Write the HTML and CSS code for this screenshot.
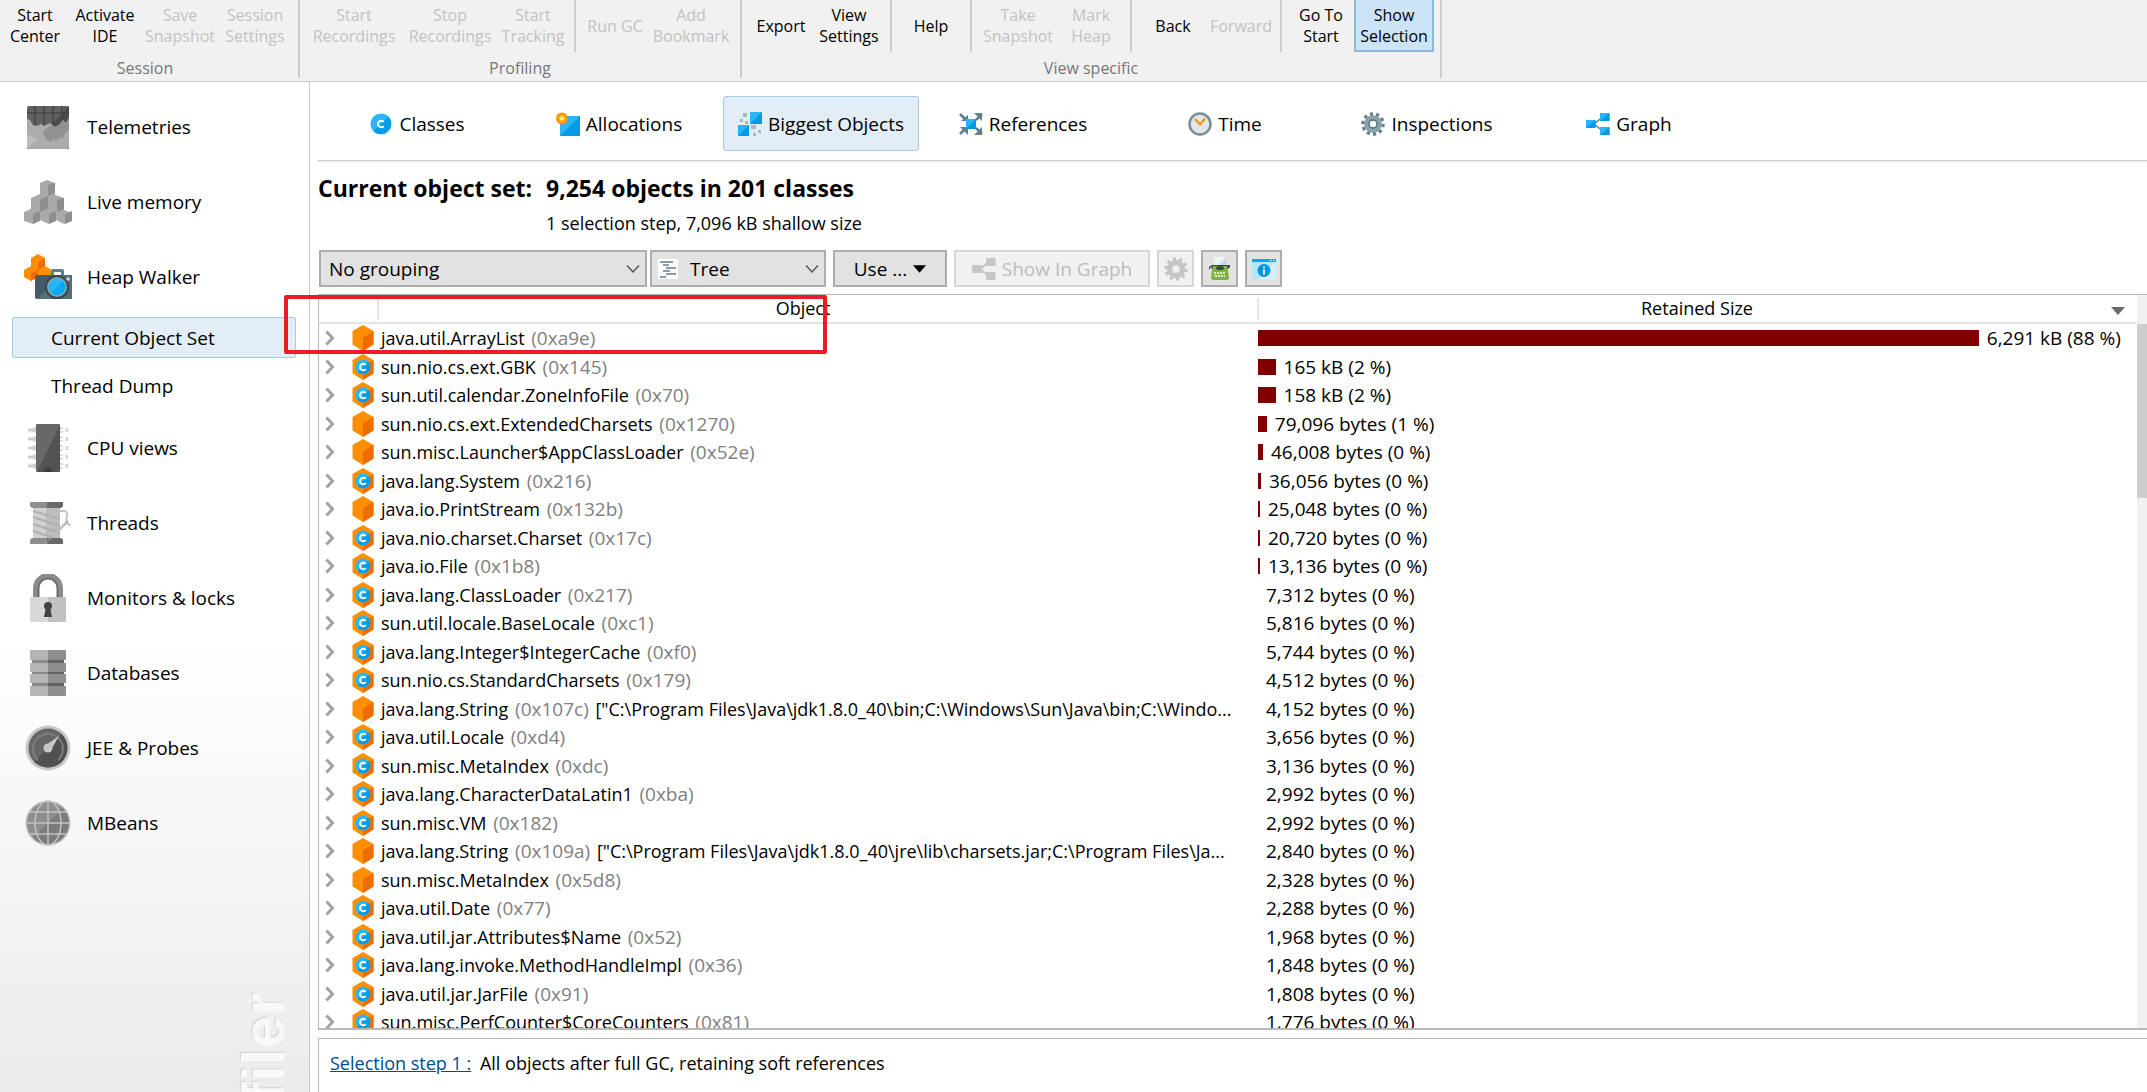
FILE: index.html
```html
<!DOCTYPE html>
<html lang="en">
<head>
<meta charset="utf-8">
<title>JProfiler - Heap Walker</title>
<link rel="stylesheet" href="styles.css">
</head>
<body>
<svg class="defs" aria-hidden="true">
  <symbol id="arrow" viewBox="0 0 10 16"><path d="M1.5 1.5 7.5 8 1.5 14.5" fill="none" stroke="#a2a2a2" stroke-width="3"/></symbol>
  <symbol id="cube" viewBox="0 0 22 26"><path d="M11 0 21.500 6V19.500L11 26 .5 19.500V6z" fill="#ff8f00"/><path d="M11 12.500 21.500 6V19.500L11 26z" fill="#ef6c00"/></symbol>
  <symbol id="class" viewBox="0 0 22 26"><path d="M11 0 21.500 6V19.500L11 26 .5 19.500V6z" fill="#ff8f00"/><path d="M11 12.500 21.500 6V19.500L11 26z" fill="#ef6c00"/><circle cx="11" cy="13" r="7.500" fill="#29b6f6"/><path d="M16.300 7.700A7.500 7.500 0 0 1 5.700 18.300z" fill="#039be5"/><path d="M13.800 10.800A3.300 3.300 0 1 0 13.800 15.200" fill="none" stroke="#fff" stroke-width="2"/></symbol>
  <symbol id="graph" viewBox="0 0 24 24"><path d="M8 12 18 4M8 12 18 20" stroke="#607d8b" stroke-width="1.500"/><path d="M0 8H9.500V16H0zM14 1H23.500V9H14zM14 15H23.500V23H14z" fill="#29b6f6"/><path d="M9.500 8V16H0zM23.500 1V9H14zM23.500 15V23H14z" fill="#039be5"/></symbol>
  <symbol id="graph-off" viewBox="0 0 24 24"><path d="M8 12 18 4M8 12 18 20" stroke="#c6c6c6" stroke-width="2"/><path d="M0 8H9.500V16H0zM14 1H23.500V9H14zM14 15H23.500V23H14z" fill="#c6c6c6"/></symbol>
  <symbol id="chevron" viewBox="0 0 14 10"><path d="M1 1.500 7 8 13 1.500" fill="none" stroke="#555" stroke-width="1.500"/></symbol>
</svg>

<header class="ribbon">
  <section class="group">
    <div class="tools">
      <button class="tool w70">Start<br>Center</button>
      <button class="tool w70">Activate<br>IDE</button>
      <button class="tool w80" disabled>Save<br>Snapshot</button>
      <button class="tool w70" disabled>Session<br>Settings</button>
    </div>
    <p class="caption">Session</p>
  </section>
  <section class="group">
    <div class="tools">
      <button class="tool w96" disabled>Start<br>Recordings</button>
      <button class="tool w96" disabled>Stop<br>Recordings</button>
      <button class="tool w70" disabled>Start<br>Tracking</button>
      <span class="sep"></span>
      <button class="tool w66" disabled>Run GC</button>
      <button class="tool w86" disabled>Add<br>Bookmark</button>
    </div>
    <p class="caption">Profiling</p>
  </section>
  <section class="group">
    <div class="tools">
      <button class="tool w66">Export</button>
      <button class="tool w70">View<br>Settings</button>
      <span class="sep"></span>
      <button class="tool w66">Help</button>
      <span class="sep"></span>
      <button class="tool w80" disabled>Take<br>Snapshot</button>
      <button class="tool w66" disabled>Mark<br>Heap</button>
      <span class="sep"></span>
      <button class="tool w70">Back</button>
      <button class="tool w66" disabled>Forward</button>
      <span class="sep"></span>
      <button class="tool w66">Go To<br>Start</button>
      <button class="tool w80 active">Show<br>Selection</button>
    </div>
    <p class="caption">View specific</p>
  </section>
</header>

<div class="workspace">
  <nav class="sidebar">
    <a class="view" href="#telemetries"><svg viewBox="0 0 48 48"><rect x="3" y="3" width="42" height="43" rx="2" fill="#616161"/><path d="M45 3V46H3z" fill="#4c4c4c"/><path d="M3 10H45M11 3V24M20 3V24M29 3V24M38 3V24" stroke="#3a3a3a" stroke-width="1"/><path d="M3 16 6 17 9 22 13 23 17 21 20 23 26 20 31 24 35 22 39 17 42 20 45 14V44a2 2 0 0 1-2 2H5a2 2 0 0 1-2-2z" fill="#acacac"/><path d="M19 29 26 22 31 24 35 22 39 17 42 20 45 15V27L41 30 39 36 36 34 32 38 29 36 27 39 22 37z" fill="#929292"/><path d="M3 31 14 36 3 45z" fill="#bdbdbd"/></svg>Telemetries</a>
    <a class="view" href="#live"><svg viewBox="0 0 48 48"><path d="M16 5 23 2 31 5V17L40 20V32L48 35V43L40 46 32 42 25 46 16 42 9 46 0 43V34L7 31V20L16 16z" fill="#a9a9a9"/><path d="M24 7 31 5V15L24 18zM16 22 24 18 24 30 16 34zM33 22 40 20V31L33 34zM9 36 16 33V43L9 46zM25 36 32 33V43L25 46zM41 36 48 33V43L41 46z" fill="#8e8e8e"/></svg>Live memory</a>
    <a class="view" href="#heap"><svg viewBox="0 0 48 48"><path d="M7 5 14 1 21 5V13L28 17V23L20 27 14 24 7 28 0 24V17L7 13z" fill="#ff8f00"/><path d="M14 9 21 5V13L14 17zM7 20 14 17V24L7 28z" fill="#ef6c00"/><path d="M27 23V18q0-2 2-2H38q2 0 2 2v5H37V19H30v4z" fill="#607d8b"/><rect x="11" y="22" width="37" height="24" rx="2" fill="#455a64"/><path d="M48 22V46H13L37 22z" fill="#546e7a"/><circle cx="33" cy="34" r="12" fill="#37474f"/><circle cx="33" cy="34" r="10" fill="#90a4ae"/><circle cx="33" cy="34" r="8.500" fill="#29b6f6"/><path d="M39 28A8.500 8.500 0 0 1 27 40z" fill="#03a9f4"/><circle cx="44" cy="26" r="1.800" fill="#cfd8dc"/></svg>Heap Walker</a>
    <div class="subviews">
      <a class="sub selected" href="#objects">Current Object Set</a>
      <a class="sub" href="#dump">Thread Dump</a>
    </div>
    <a class="view" href="#cpu"><svg viewBox="0 0 48 48"><path d="M4 6 12 3V9zM4 15l8-3v6zM4 24l8-3v6zM4 33l8-3v6zM4 42l8-3v6zM4 4.500h8v3H4zM4 13.500h8v3H4zM4 22.500h8v3H4zM4 31.500h8v3H4zM4 40.500h8v3H4z" fill="#cfcfcf"/><path d="M44 6 36 3V9zM44 15l-8-3v6zM44 24l-8-3v6zM44 33l-8-3v6zM44 42l-8-3v6zM36 4.500h8v3h-8zM36 13.500h8v3h-8zM36 22.500h8v3h-8zM36 31.500h8v3h-8zM36 40.500h8v3h-8z" fill="#b5b5b5"/><rect x="12" width="24" height="48" rx="1" fill="#686868"/><path d="M36 1V48H13z" fill="#535353"/><path d="M20 48a4 4.500 0 0 1 8 0z" fill="#3c3c3c"/></svg>CPU views</a>
    <a class="view" href="#threads"><svg viewBox="0 0 48 48"><path d="M36 12h4q4 0 3 5l-1 5q-1 3 5 4" fill="none" stroke="#c4c4c4" stroke-width="2"/><path d="M9 8H36V40H9z" fill="#d0d0d0"/><path d="M22 8H36V40H22z" fill="#bdbdbd"/><path d="M9 12 36 20M9 18 36 27M9 25 36 34M9 32 30 39" stroke="#b0b0b0" stroke-width="2"/><path d="M6 3H39V7L37 9H8L6 7zM6 45H39V41L37 39H8L6 41z" fill="#8d8d8d"/><path d="M23 3H39V7L37 9H23zM23 45H39V41L37 39H23z" fill="#696969"/><path d="M19 47 43 21l2 2z" fill="#b8b8b8"/></svg>Threads</a>
    <a class="view" href="#monitors"><svg viewBox="0 0 48 48"><path d="M12 24V14a12 12 0 0 1 24 0V24" fill="none" stroke="#8b8b8b" stroke-width="6"/><path d="M14.500 24V14a9.500 9.500 0 0 1 19 0V24" fill="none" stroke="#6c6c6c" stroke-width="2"/><rect x="6" y="23" width="36" height="25" rx="1" fill="#d8d8d8"/><path d="M24 23H41q1 0 1 1V47q0 1-1 1H24z" fill="#c1c1c1"/><circle cx="24" cy="32" r="4" fill="#424242"/><path d="M22 33h4l2 10h-8z" fill="#424242"/></svg>Monitors &amp; locks</a>
    <a class="view" href="#databases"><svg viewBox="0 0 48 48"><path d="M8 8H40V40H8z" fill="#8a8a8a"/><path d="M24 8H40V40H24z" fill="#626262"/><path d="M6 2q0-1 1-1H24V11H7q-1 0-1-1zM6 14H24V23H7q-1 0-1-1zM6 25H24V34H7q-1 0-1-1zM6 37H24V47H7q-1 0-1-1z" fill="#b5b5b5"/><path d="M42 2q0-1-1-1H24V11H41q1 0 1-1zM42 14H24V23H41q1 0 1-1zM42 25H24V34H41q1 0 1-1zM42 37H24V47H41q1 0 1-1z" fill="#8e8e8e"/></svg>Databases</a>
    <a class="view" href="#probes"><svg viewBox="0 0 48 48"><circle cx="24" cy="24" r="22.500" fill="#c8c8c8"/><circle cx="24" cy="24" r="19.500" fill="#666"/><path d="M37.800 10.200A19.500 19.500 0 0 1 10.200 37.800z" fill="#505050"/><path d="M14 36A15 15 0 1 1 34 36" fill="none" stroke="#7d7d7d" stroke-width="2"/><path d="M35 12 27 26 22 21z" fill="#c8c8c8"/><circle cx="24" cy="24" r="4.500" fill="#c8c8c8"/></svg>JEE &amp; Probes</a>
    <a class="view" href="#mbeans"><svg viewBox="0 0 48 48"><circle cx="24" cy="24" r="22" fill="#8f8f8f"/><path d="M39.600 8.400A22 22 0 0 1 8.400 39.600z" fill="#7b7b7b"/><g fill="none" stroke="#c2c2c2" stroke-width="1.500"><circle cx="24" cy="24" r="21.800"/><ellipse cx="24" cy="24" rx="13" ry="22"/><path d="M24 2V46M2 24H46M6 13H42M6 35H42"/></g></svg>MBeans</a>
    <span class="brand">JProfiler</span>
  </nav>

  <main class="content">
    <nav class="tabs">
      <button class="tab"><svg viewBox="0 0 24 24"><circle cx="12" cy="12" r="10.500" fill="#29b6f6"/><path d="M19.400 4.600A10.500 10.500 0 0 1 4.600 19.400z" fill="#039be5"/><path d="M14.800 9.800A3.300 3.300 0 1 0 14.800 14.200" fill="none" stroke="#fff" stroke-width="2"/></svg>Classes</button>
      <button class="tab"><svg viewBox="0 0 24 24"><path d="M4 4H24V24H4z" fill="#29b6f6"/><path d="M24 4V24H4z" fill="#039be5"/><circle cx="6" cy="6.500" r="6" fill="#ff8f00"/><circle cx="6" cy="6.500" r="4" fill="#ffb300"/><circle cx="6" cy="6.500" r="2" fill="#ffecb3"/></svg>Allocations</button>
      <button class="tab current"><svg viewBox="0 0 24 24"><path d="M12 0H24V12H12zM0 13H11V24H0z" fill="#29b6f6"/><path d="M24 0V12H12zM11 13V24H0z" fill="#039be5"/><path d="M5 1H9V5H5zM2 7H5V10H2zM7 9H10V12H7zM13 13H18V17H13zM20 18H23V21H20zM15 21H18V24H15z" fill="#a6b8c2"/></svg>Biggest Objects</button>
      <button class="tab"><svg viewBox="0 0 24 24"><path d="M1 2 7 8M23 2 17 8M1 22 7 16M23 22 17 16" stroke="#607d8b" stroke-width="2.500"/><path d="M9 9H2L9 3zM15 1H23V9zM1 15H9V23zM23 15V23H15z" fill="#607d8b"/><path d="M7 7H17V17H7z" fill="#29b6f6"/><path d="M17 7V17H7z" fill="#039be5"/></svg>References</button>
      <button class="tab"><svg viewBox="0 0 24 24"><circle cx="12" cy="12" r="10.500" fill="#e4e7e9" stroke="#78909c" stroke-width="2.500"/><path d="M7 7 12 12.500 17 6.500" fill="none" stroke="#ff8f00" stroke-width="2"/></svg>Time</button>
      <button class="tab"><svg viewBox="0 0 24 24"><circle cx="12" cy="12" r="10" fill="none" stroke="#607d8b" stroke-width="3.500" pathLength="20" stroke-dasharray="1 1"/><circle cx="12" cy="12" r="6.500" fill="none" stroke="#8aa0ab" stroke-width="5"/><circle cx="12" cy="12" r="4" fill="#fff" stroke="#546e7a" stroke-width="1.500"/></svg>Inspections</button>
      <button class="tab"><svg><use href="#graph"/></svg>Graph</button>
    </nav>

    <section class="summary">
      <h1>Current object set:</h1>
      <h1>9,254 objects in 201 classes</h1>
      <p>1 selection step, 7,096 kB shallow size</p>
    </section>

    <div class="toolbar">
      <div class="combo grouping">
        <select aria-label="Grouping"><option>No grouping</option></select>
        <svg class="drop"><use href="#chevron"/></svg>
      </div>
      <div class="combo mode">
        <svg class="lead" viewBox="0 0 20 20"><path d="M0 0H20V20H0z" fill="#fff"/><path d="M2 3H15M5 6H11M8 9H18M5 12H12M8 15H18M2 18H8" stroke="#607d8b" stroke-width="1.500"/></svg>
        <select aria-label="View mode"><option>Tree</option></select>
        <svg class="drop"><use href="#chevron"/></svg>
      </div>
      <button class="push use">Use ...<svg class="down" viewBox="0 0 12 7"><path d="M0 0H12L6 7z"/></svg></button>
      <button class="push show" disabled><svg><use href="#graph-off"/></svg>Show In Graph</button>
      <button class="push square" disabled aria-label="Settings"><svg viewBox="0 0 24 24"><circle cx="12" cy="12" r="10" fill="none" stroke="#c6c6c6" stroke-width="3.500" pathLength="20" stroke-dasharray="1 1"/><circle cx="12" cy="12" r="6.500" fill="none" stroke="#c6c6c6" stroke-width="5.500"/></svg></button>
      <button class="push square" aria-label="Edit"><svg viewBox="0 0 24 24"><path d="M6 0H18V11H6z" fill="#e8f4fa"/><path d="M18 0V11H8z" fill="#c4dbe6"/><path d="M1 10 4 8H22V10L20 12H4L3 10 1 13z" fill="#37474f"/><path d="M5 9H19L20 13 21 21q0 2-2 2H5q-2 0-2-2L4 13z" fill="#7cb342"/><ellipse cx="12" cy="11" rx="4" ry="2" fill="#37474f"/><path d="M6 16H18M7 19H17" stroke="#dcedc8" stroke-width="1.800" stroke-dasharray="2 1"/></svg></button>
      <button class="push square" aria-label="Information"><svg viewBox="0 0 24 24"><path d="M0 2H24V22H0z" fill="#b3e5fc"/><path d="M24 5V22H7z" fill="#d4f0fd"/><path d="M0 2H24V5H0z" fill="#03a9f4"/><path d="M18 3h1.500v1H18zM21 3h1.500v1H21z" fill="#fff"/><circle cx="12" cy="13.500" r="6.500" fill="#0396e0"/><path d="M12 9.500V11M12 12.200V17.500" stroke="#fff" stroke-width="1.800"/></svg></button>
    </div>

    <div class="panel">
      <div class="viewport">
      <table class="objects">
        <colgroup><col class="c-mark"><col><col></colgroup>
        <thead><tr><th></th><th class="h-name">Object</th><th class="h-size">Retained Size<svg class="sort" viewBox="0 0 14 8"><path d="M0 0H14L7 8z" fill="#6b6b6b"/></svg></th></tr></thead>
        <tbody>
          <tr><td class="mark"><button><svg><use href="#arrow"/></svg></button><svg class="kind"><use href="#cube"/></svg></td><td class="name">java.util.ArrayList <i>(0xa9e)</i></td><td><div class="meter"><span class="bar" style="width:82%"></span>6,291 kB (88 %)</div></td></tr>
          <tr><td class="mark"><button><svg><use href="#arrow"/></svg></button><svg class="kind"><use href="#class"/></svg></td><td class="name">sun.nio.cs.ext.GBK <i>(0x145)</i></td><td><div class="meter"><span class="bar" style="width:2%"></span>165 kB (2 %)</div></td></tr>
          <tr><td class="mark"><button><svg><use href="#arrow"/></svg></button><svg class="kind"><use href="#class"/></svg></td><td class="name">sun.util.calendar.ZoneInfoFile <i>(0x70)</i></td><td><div class="meter"><span class="bar" style="width:2%"></span>158 kB (2 %)</div></td></tr>
          <tr><td class="mark"><button><svg><use href="#arrow"/></svg></button><svg class="kind"><use href="#cube"/></svg></td><td class="name">sun.nio.cs.ext.ExtendedCharsets <i>(0x1270)</i></td><td><div class="meter"><span class="bar" style="width:1%"></span>79,096 bytes (1 %)</div></td></tr>
          <tr><td class="mark"><button><svg><use href="#arrow"/></svg></button><svg class="kind"><use href="#cube"/></svg></td><td class="name">sun.misc.Launcher$AppClassLoader <i>(0x52e)</i></td><td><div class="meter"><span class="bar" style="width:5px"></span>46,008 bytes (0 %)</div></td></tr>
          <tr><td class="mark"><button><svg><use href="#arrow"/></svg></button><svg class="kind"><use href="#class"/></svg></td><td class="name">java.lang.System <i>(0x216)</i></td><td><div class="meter"><span class="bar" style="width:3px"></span>36,056 bytes (0 %)</div></td></tr>
          <tr><td class="mark"><button><svg><use href="#arrow"/></svg></button><svg class="kind"><use href="#cube"/></svg></td><td class="name">java.io.PrintStream <i>(0x132b)</i></td><td><div class="meter"><span class="bar" style="width:2px"></span>25,048 bytes (0 %)</div></td></tr>
          <tr><td class="mark"><button><svg><use href="#arrow"/></svg></button><svg class="kind"><use href="#class"/></svg></td><td class="name">java.nio.charset.Charset <i>(0x17c)</i></td><td><div class="meter"><span class="bar" style="width:2px"></span>20,720 bytes (0 %)</div></td></tr>
          <tr><td class="mark"><button><svg><use href="#arrow"/></svg></button><svg class="kind"><use href="#class"/></svg></td><td class="name">java.io.File <i>(0x1b8)</i></td><td><div class="meter"><span class="bar" style="width:2px"></span>13,136 bytes (0 %)</div></td></tr>
          <tr><td class="mark"><button><svg><use href="#arrow"/></svg></button><svg class="kind"><use href="#class"/></svg></td><td class="name">java.lang.ClassLoader <i>(0x217)</i></td><td><div class="meter"><span class="bar" style="width:0"></span>7,312 bytes (0 %)</div></td></tr>
          <tr><td class="mark"><button><svg><use href="#arrow"/></svg></button><svg class="kind"><use href="#class"/></svg></td><td class="name">sun.util.locale.BaseLocale <i>(0xc1)</i></td><td><div class="meter"><span class="bar" style="width:0"></span>5,816 bytes (0 %)</div></td></tr>
          <tr><td class="mark"><button><svg><use href="#arrow"/></svg></button><svg class="kind"><use href="#class"/></svg></td><td class="name">java.lang.Integer$IntegerCache <i>(0xf0)</i></td><td><div class="meter"><span class="bar" style="width:0"></span>5,744 bytes (0 %)</div></td></tr>
          <tr><td class="mark"><button><svg><use href="#arrow"/></svg></button><svg class="kind"><use href="#class"/></svg></td><td class="name">sun.nio.cs.StandardCharsets <i>(0x179)</i></td><td><div class="meter"><span class="bar" style="width:0"></span>4,512 bytes (0 %)</div></td></tr>
          <tr><td class="mark"><button><svg><use href="#arrow"/></svg></button><svg class="kind"><use href="#cube"/></svg></td><td class="name">java.lang.String <i>(0x107c)</i> ["C:\Program Files\Java\jdk1.8.0_40\bin;C:\Windows\Sun\Java\bin;C:\Windo...</td><td><div class="meter"><span class="bar" style="width:0"></span>4,152 bytes (0 %)</div></td></tr>
          <tr><td class="mark"><button><svg><use href="#arrow"/></svg></button><svg class="kind"><use href="#class"/></svg></td><td class="name">java.util.Locale <i>(0xd4)</i></td><td><div class="meter"><span class="bar" style="width:0"></span>3,656 bytes (0 %)</div></td></tr>
          <tr><td class="mark"><button><svg><use href="#arrow"/></svg></button><svg class="kind"><use href="#class"/></svg></td><td class="name">sun.misc.MetaIndex <i>(0xdc)</i></td><td><div class="meter"><span class="bar" style="width:0"></span>3,136 bytes (0 %)</div></td></tr>
          <tr><td class="mark"><button><svg><use href="#arrow"/></svg></button><svg class="kind"><use href="#class"/></svg></td><td class="name">java.lang.CharacterDataLatin1 <i>(0xba)</i></td><td><div class="meter"><span class="bar" style="width:0"></span>2,992 bytes (0 %)</div></td></tr>
          <tr><td class="mark"><button><svg><use href="#arrow"/></svg></button><svg class="kind"><use href="#class"/></svg></td><td class="name">sun.misc.VM <i>(0x182)</i></td><td><div class="meter"><span class="bar" style="width:0"></span>2,992 bytes (0 %)</div></td></tr>
          <tr><td class="mark"><button><svg><use href="#arrow"/></svg></button><svg class="kind"><use href="#cube"/></svg></td><td class="name">java.lang.String <i>(0x109a)</i> ["C:\Program Files\Java\jdk1.8.0_40\jre\lib\charsets.jar;C:\Program Files\Ja...</td><td><div class="meter"><span class="bar" style="width:0"></span>2,840 bytes (0 %)</div></td></tr>
          <tr><td class="mark"><button><svg><use href="#arrow"/></svg></button><svg class="kind"><use href="#cube"/></svg></td><td class="name">sun.misc.MetaIndex <i>(0x5d8)</i></td><td><div class="meter"><span class="bar" style="width:0"></span>2,328 bytes (0 %)</div></td></tr>
          <tr><td class="mark"><button><svg><use href="#arrow"/></svg></button><svg class="kind"><use href="#class"/></svg></td><td class="name">java.util.Date <i>(0x77)</i></td><td><div class="meter"><span class="bar" style="width:0"></span>2,288 bytes (0 %)</div></td></tr>
          <tr><td class="mark"><button><svg><use href="#arrow"/></svg></button><svg class="kind"><use href="#class"/></svg></td><td class="name">java.util.jar.Attributes$Name <i>(0x52)</i></td><td><div class="meter"><span class="bar" style="width:0"></span>1,968 bytes (0 %)</div></td></tr>
          <tr><td class="mark"><button><svg><use href="#arrow"/></svg></button><svg class="kind"><use href="#class"/></svg></td><td class="name">java.lang.invoke.MethodHandleImpl <i>(0x36)</i></td><td><div class="meter"><span class="bar" style="width:0"></span>1,848 bytes (0 %)</div></td></tr>
          <tr><td class="mark"><button><svg><use href="#arrow"/></svg></button><svg class="kind"><use href="#class"/></svg></td><td class="name">java.util.jar.JarFile <i>(0x91)</i></td><td><div class="meter"><span class="bar" style="width:0"></span>1,808 bytes (0 %)</div></td></tr>
          <tr><td class="mark"><button><svg><use href="#arrow"/></svg></button><svg class="kind"><use href="#class"/></svg></td><td class="name">sun.misc.PerfCounter$CoreCounters <i>(0x81)</i></td><td><div class="meter"><span class="bar" style="width:0"></span>1,776 bytes (0 %)</div></td></tr>
        </tbody>
      </table>
      </div>
      <div class="scroll"><div class="thumb"></div></div>
      <div class="marker"></div>
    </div>

    <footer class="steps"><a href="#step1">Selection step 1 :</a> All objects after full GC, retaining soft references</footer>
  </main>
</div>
</body>
</html>
```
FILE: styles.css
```css
* { box-sizing: border-box; }

body {
  margin: 0;
  height: 100vh;
  display: flex;
  flex-direction: column;
  overflow: hidden;
  background: #fff;
  color: #000;
  font: 18px/28px "Open Sans", "Noto Sans", sans-serif;
}

button, select { font: inherit; color: inherit; }
button { padding: 0; border: 0; background: none; }
svg { flex: none; display: block; }
p, h1 { margin: 0; }
.defs { position: absolute; width: 0; height: 0; }

/* Ribbon */
.ribbon {
  flex: none;
  display: flex;
  height: 82px;
  background: #f1f1f1;
  border-bottom: 1px solid #c8c8c8;
  font-size: 16px;
  line-height: 21px;
}
.group { height: 78px; padding-right: 6px; border-right: 2px solid #cdcdcd; }
.group:first-child { padding-right: 8px; }
.group + .group { padding-left: 6px; }
.tools { display: flex; height: 52px; }
.tool { height: 52px; white-space: nowrap; }
.tool:disabled { color: #c3c3c3; }
.tool.active { padding-top: 2px; background: #cce4f7; border: 2px solid #8fb9dc; border-top: 0; }
.w66 { width: 66px; }
.w70 { width: 70px; }
.w80 { width: 80px; }
.w86 { width: 86px; }
.w96 { width: 96px; }
.sep { width: 2px; margin: 0 6px; background: #cdcdcd; }
.caption { padding-top: 6px; text-align: center; color: #777; }

/* Sidebar */
.workspace { flex: 1; min-height: 0; display: flex; }
.sidebar {
  position: relative;
  flex: none;
  width: 310px;
  padding-top: 7px;
  overflow: hidden;
  border-right: 1px solid #c8c8c8;
  background: linear-gradient(#fff 55%, #ebebeb);
}
.view, .sub { display: flex; align-items: center; color: #000; text-decoration: none; font-size: 19px; }
.view { height: 75px; padding-left: 24px; gap: 15px; }
.view svg { width: 48px; height: 48px; }
.subviews { display: flex; flex-direction: column; gap: 7px; padding: 3px 13px 4px 12px; }
.sub { height: 41px; padding-left: 38px; border: 1px solid transparent; border-radius: 2px; }
.sub.selected { background: #e3edf6; border-color: #a6cbe4; }
.brand {
  position: absolute;
  top: 910px;
  right: 15px;
  writing-mode: vertical-rl;
  transform: rotate(180deg);
  font: bold 60px/60px "Liberation Sans", sans-serif;
  color: #f8f8f8;
  text-shadow: 1px -1px 1px #d2d2d2;
}

/* Main area */
.content { flex: 1; min-width: 0; display: flex; flex-direction: column; padding-left: 8px; }
.tabs { flex: none; display: flex; gap: 6px; height: 79px; padding: 14px 0 8px 1px; border-bottom: 1px solid #c8c8c8; box-shadow: 0 2px #f1f1f1; }
.tab { display: flex; align-items: center; justify-content: center; gap: 6px; width: 196px; height: 55px; border: 1px solid transparent; border-radius: 3px; font-size: 19px; }
.tab svg { width: 24px; height: 24px; }
.tab.current { background: #e3edf6; border-color: #a6cbe4; }

.summary { flex: none; display: grid; grid-template-columns: 228px 1fr; height: 89px; padding-top: 10px; align-content: start; }
.summary h1 { font-size: 23px; line-height: 35px; white-space: nowrap; }
.summary p { grid-column: 2; line-height: 35px; }

.toolbar { flex: none; display: flex; height: 44px; padding-left: 1px; gap: 7px; }
.combo { position: relative; height: 37px; }
.combo select {
  appearance: none;
  width: 100%;
  height: 100%;
  padding: 0 30px 0 8px;
  border: 2px solid #adadad;
  border-radius: 0;
  background: #e2e2e2;
  font-size: 19px;
}
.grouping { width: 328px; margin-right: -4px; }
.mode { width: 176px; }
.mode select { padding-left: 38px; }
.drop { position: absolute; right: 7px; top: 14px; width: 14px; height: 10px; pointer-events: none; }
.lead { position: absolute; left: 8px; top: 9px; width: 20px; height: 20px; }
.push { display: flex; align-items: center; justify-content: center; gap: 6px; height: 37px; border: 2px solid #adadad; background: #e2e2e2; font-size: 19px; }
.push:disabled { background: #f1f1f1; border-color: #d6d6d6; color: #bcbcbc; }
.push svg { width: 24px; height: 24px; }
.push .down { width: 13px; height: 8px; }
.use { width: 114px; }
.show { width: 196px; }
.square { width: 37px; }

/* Object table */
.panel { position: relative; flex: 1; min-height: 0; display: flex; border: 1px solid #b9b9b9; border-width: 1px 0 2px 1px; }
.viewport { flex: 1; min-width: 0; overflow: hidden; }
.objects { width: 100%; table-layout: fixed; border-collapse: separate; border-spacing: 0; }
.c-mark { width: 58px; }
.objects th { position: relative; height: 29px; padding: 0; border-bottom: 2px solid #e3e3e3; font-weight: normal; line-height: 27px; }
.objects .h-name { padding-right: 28px; }
.objects th + th::before { content: ""; position: absolute; left: 0; top: 3px; bottom: 2px; width: 2px; background: #e3e3e3; }
.sort { position: absolute; right: 12px; top: 12px; width: 14px; height: 8px; }
.objects td { height: 28px; padding: 0; line-height: 28px; white-space: nowrap; overflow: hidden; }
.objects tr:nth-child(even) td { height: 29px; }
.objects .mark { line-height: 0; }
.mark > * { display: inline-block; vertical-align: middle; }
.mark button { width: 10px; height: 16px; margin-left: 6px; }
.mark button svg { width: 10px; height: 16px; }
.kind { width: 22px; height: 26px; margin-left: 17px; }
.objects .name { padding-left: 4px; }
.name i { margin: 0 2px; font-style: normal; font-size: 19px; line-height: 20px; color: #808080; }
.meter { display: flex; align-items: center; gap: 8px; padding-left: 1px; font-size: 19px; }
.bar { flex: none; height: 16px; background: #800000; }
.scroll { flex: none; width: 10px; padding-top: 29px; background: #f1f1f1; }
.thumb { height: 174px; background: #cdcdcd; }

/* Highlight drawn over the first row */
.marker { position: absolute; left: -35px; top: 0; width: 543px; height: 59px; border: 4px solid #ed1c24; border-radius: 2px; }

.steps { flex: none; height: 54px; margin-top: 8px; padding: 10px 0 0 11px; border: 1px solid #b9b9b9; border-width: 1px 0 0 1px; }
.steps a { margin-right: 4px; color: #004b8d; }
```
